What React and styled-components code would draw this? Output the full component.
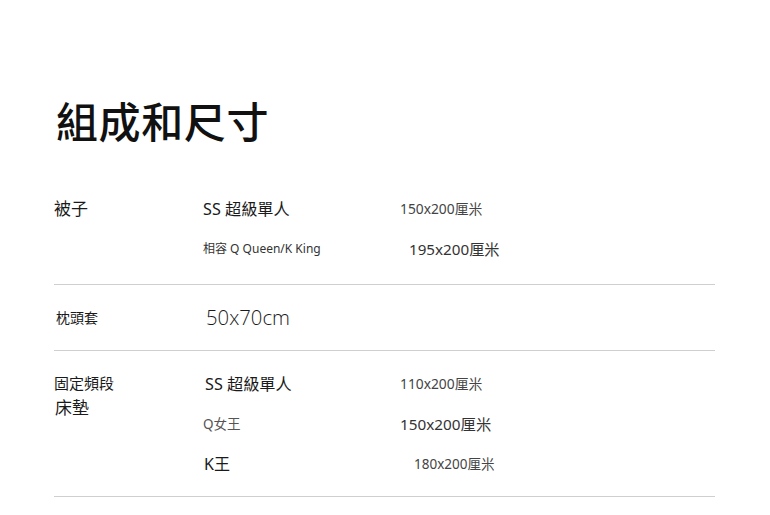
import React from "react";
import styled, { createGlobalStyle } from "styled-components";

const Global = createGlobalStyle`
  html, body { margin: 0; padding: 0; background: #fff; }
  body { font-family: "Noto Sans", "Noto Sans CJK TC", sans-serif; color: #1a1a1a; }
`;

const Page = styled.div`
  width: 770px;
  height: 515px;
  box-sizing: border-box;
  padding: 99px 55px 0 54px;
  background: #fff;
  overflow: hidden;
`;

const Title = styled.h1`
  margin: 0 0 35px 2px;
  font-family: "Noto Sans CJK TC", sans-serif;
  font-weight: 500;
  font-size: 42px;
  line-height: 42px;
  color: #111;
  letter-spacing: 0.6px;
`;

const Section = styled.section`
  display: grid;
  grid-template-columns: 149px 1fr;
  padding: 12px 0 ${(p) => p.$padBottom ?? 13}px;
  border-bottom: 1px solid #cfcfcf;
`;

const Label = styled.div`
  padding-top: 8px;
  display: flex;
  flex-direction: column;
`;

const LabelLine = styled.span`
  font-family: "Noto Sans CJK TC", sans-serif;
  font-size: ${(p) => p.$size}px;
  line-height: 24px;
  color: #1a1a1a;
  padding-left: ${(p) => p.$indent ?? 0}px;
`;

const Rows = styled.div`
  display: flex;
  flex-direction: column;
`;

const Row = styled.div`
  display: grid;
  grid-template-columns: 197px 1fr;
  align-items: center;
  height: 40px;
`;

const Cell = styled.span`
  font-family: ${(p) =>
    p.$light
      ? `"Open Sans", "Noto Sans CJK TC", sans-serif`
      : `"Noto Sans", "Noto Sans CJK TC", sans-serif`};
  font-weight: ${(p) => (p.$light ? 300 : 400)};
  font-size: ${(p) => p.$size}px;
  color: ${(p) => p.$color ?? "#1a1a1a"};
  padding-left: ${(p) => p.$indent ?? 0}px;
  white-space: nowrap;
`;

export default function App() {
  return (
    <>
      <Global />
      <Page>
        <Title>組成和尺寸</Title>

        <Section $padBottom={16}>
          <Label>
            <LabelLine $size={17}>被子</LabelLine>
          </Label>
          <Rows>
            <Row>
              <Cell $size={16.2} $indent={0}>SS 超級單人</Cell>
              <Cell $size={13.8} $color="#444">150x200厘米</Cell>
            </Row>
            <Row>
              <Cell $size={12} $color="#333">相容 Q Queen/K King</Cell>
              <Cell $size={15.2} $color="#333" $indent={9}>195x200厘米</Cell>
            </Row>
          </Rows>
        </Section>

        <Section>
          <Label>
            <LabelLine $size={14} $indent={2}>枕頭套</LabelLine>
          </Label>
          <Rows>
            <Row>
              <Cell $size={20.3} $light $indent={3}>50x70cm</Cell>
            </Row>
          </Rows>
        </Section>

        <Section>
          <Label>
            <LabelLine $size={15}>固定頻段</LabelLine>
            <LabelLine $size={17} $indent={1}>床墊</LabelLine>
          </Label>
          <Rows>
            <Row>
              <Cell $size={16.2} $indent={2}>SS 超級單人</Cell>
              <Cell $size={13.8} $color="#444">110x200厘米</Cell>
            </Row>
            <Row>
              <Cell $size={13.5} $color="#555">Q女王</Cell>
              <Cell $size={15.3} $color="#333">150x200厘米</Cell>
            </Row>
            <Row>
              <Cell $size={16} $indent={1}>K王</Cell>
              <Cell $size={13.5} $color="#444" $indent={14}>180x200厘米</Cell>
            </Row>
          </Rows>
        </Section>
      </Page>
    </>
  );
}
